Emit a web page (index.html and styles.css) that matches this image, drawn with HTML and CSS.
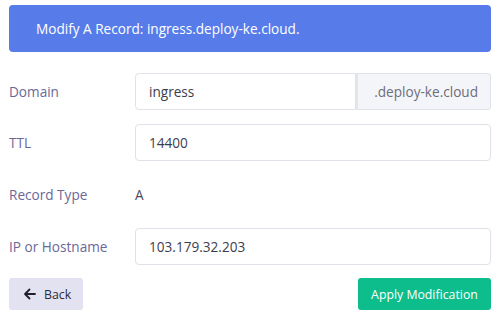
FILE: index.html
```html
<!DOCTYPE html>
<html>
<head>
<meta charset="utf-8">
<link rel="stylesheet" href="styles.css">
</head>
<body>
<div class="page">
  <div class="banner">Modify A Record: ingress.deploy-ke.cloud.</div>
  <div class="form">
    <div class="row">
      <label class="label">Domain</label>
      <div class="group">
        <div class="input joined">ingress</div>
        <div class="addon">.deploy-ke.cloud</div>
      </div>
    </div>
    <div class="row">
      <label class="label">TTL</label>
      <div class="input">14400</div>
    </div>
    <div class="row static">
      <label class="label">Record Type</label>
      <div class="value">A</div>
    </div>
    <div class="row">
      <label class="label">IP or Hostname</label>
      <div class="input">103.179.32.203</div>
    </div>
  </div>
  <div class="actions">
    <button class="btn back"><svg width="13" height="12" viewBox="0 0 13 12"><path d="M12 6H2M6.5 1.5L2 6l4.5 4.5" fill="none" stroke="#1f1f2e" stroke-width="1.8" stroke-linecap="round" stroke-linejoin="round"/></svg>Back</button>
    <button class="btn apply">Apply Modification</button>
  </div>
</div>
</body>
</html>
```
FILE: styles.css
```css
* { box-sizing: border-box; }
html, body { margin: 0; background: #fff; }
body { font-family: "Open Sans", "Noto Sans", sans-serif; font-size: 13.6px; }
.page { padding: 5px 6px 0 9px; }
.banner {
  background: #577ce9;
  color: #fff;
  border-radius: 4px;
  height: 47px;
  display: flex;
  align-items: center;
  padding-left: 27px;
  font-size: 13.6px;
}
.form { margin-top: 21px; display: flex; flex-direction: column; gap: 14px; }
.row { display: grid; grid-template-columns: 126px 1fr; align-items: center; }
.row.static { height: 39px; }
.label { color: #6b6898; }
.value { color: #4a4a5c; }
.group { display: flex; }
.input {
  height: 37px;
  border: 1px solid #e1e1ea;
  border-radius: 4px;
  display: flex;
  align-items: center;
  padding-left: 13px;
  color: #3d3d4d;
  flex: 1;
}
.input.joined { border-radius: 4px 0 0 4px; }
.addon {
  width: 135px;
  height: 37px;
  border: 1px solid #e1e1ea;
  border-left: 2px solid #e4e4ec;
  border-radius: 0 4px 4px 0;
  background: #f4f5f8;
  color: #6d6d7a;
  display: flex;
  align-items: center;
  justify-content: flex-end;
  padding-right: 12px;
}
.actions { display: flex; justify-content: space-between; margin-top: 13px; }
.btn {
  font-family: inherit;
  font-size: 12.3px;
  border: 0;
  border-radius: 3px;
  height: 32px;
  display: flex;
  align-items: center;
}
.back { background: #e2e2f0; color: #2b2b3a; width: 74px; padding-left: 14px; gap: 8px; }
.apply { background: #0dbd8b; color: #fff; width: 133px; justify-content: center; }
```
